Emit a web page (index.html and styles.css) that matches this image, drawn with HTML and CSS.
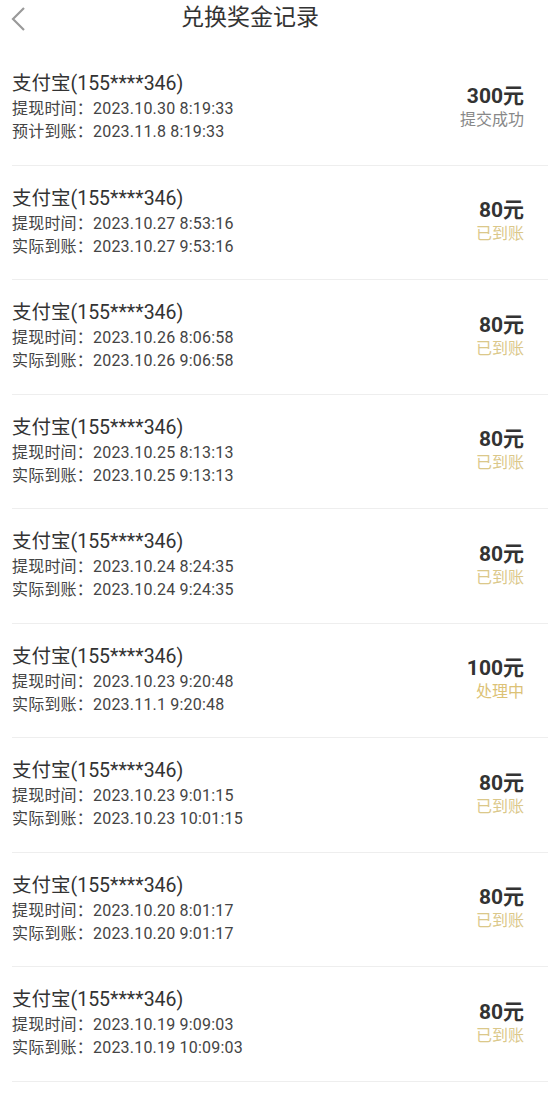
FILE: index.html
```html
<!DOCTYPE html>
<html lang="zh-CN">
<head>
<meta charset="UTF-8">
<meta name="viewport" content="width=device-width, initial-scale=1.0">
<title>兑换奖金记录</title>
<link rel="stylesheet" href="styles.css">
</head>
<body>
<div class="header">
  <a class="back" href="#">
    <svg width="16" height="26" viewBox="0 0 16 26"><path d="M14 2 L3 13 L14 24" fill="none" stroke="#9a9a9a" stroke-width="2.2"/></svg>
  </a>
  <h1>兑换奖金记录</h1>
</div>
<ul class="records">
  <li class="record">
    <div class="info">
      <div class="account">支付宝(155****346)</div>
      <div class="line">提现时间：2023.10.30 8:19:33</div>
      <div class="line">预计到账：2023.11.8 8:19:33</div>
    </div>
    <div class="result">
      <div class="amount">300元</div>
      <div class="status submitted">提交成功</div>
    </div>
  </li>
  <li class="record">
    <div class="info">
      <div class="account">支付宝(155****346)</div>
      <div class="line">提现时间：2023.10.27 8:53:16</div>
      <div class="line">实际到账：2023.10.27 9:53:16</div>
    </div>
    <div class="result">
      <div class="amount">80元</div>
      <div class="status done">已到账</div>
    </div>
  </li>
  <li class="record">
    <div class="info">
      <div class="account">支付宝(155****346)</div>
      <div class="line">提现时间：2023.10.26 8:06:58</div>
      <div class="line">实际到账：2023.10.26 9:06:58</div>
    </div>
    <div class="result">
      <div class="amount">80元</div>
      <div class="status done">已到账</div>
    </div>
  </li>
  <li class="record">
    <div class="info">
      <div class="account">支付宝(155****346)</div>
      <div class="line">提现时间：2023.10.25 8:13:13</div>
      <div class="line">实际到账：2023.10.25 9:13:13</div>
    </div>
    <div class="result">
      <div class="amount">80元</div>
      <div class="status done">已到账</div>
    </div>
  </li>
  <li class="record">
    <div class="info">
      <div class="account">支付宝(155****346)</div>
      <div class="line">提现时间：2023.10.24 8:24:35</div>
      <div class="line">实际到账：2023.10.24 9:24:35</div>
    </div>
    <div class="result">
      <div class="amount">80元</div>
      <div class="status done">已到账</div>
    </div>
  </li>
  <li class="record">
    <div class="info">
      <div class="account">支付宝(155****346)</div>
      <div class="line">提现时间：2023.10.23 9:20:48</div>
      <div class="line">实际到账：2023.11.1 9:20:48</div>
    </div>
    <div class="result">
      <div class="amount">100元</div>
      <div class="status pending">处理中</div>
    </div>
  </li>
  <li class="record">
    <div class="info">
      <div class="account">支付宝(155****346)</div>
      <div class="line">提现时间：2023.10.23 9:01:15</div>
      <div class="line">实际到账：2023.10.23 10:01:15</div>
    </div>
    <div class="result">
      <div class="amount">80元</div>
      <div class="status done">已到账</div>
    </div>
  </li>
  <li class="record">
    <div class="info">
      <div class="account">支付宝(155****346)</div>
      <div class="line">提现时间：2023.10.20 8:01:17</div>
      <div class="line">实际到账：2023.10.20 9:01:17</div>
    </div>
    <div class="result">
      <div class="amount">80元</div>
      <div class="status done">已到账</div>
    </div>
  </li>
  <li class="record">
    <div class="info">
      <div class="account">支付宝(155****346)</div>
      <div class="line">提现时间：2023.10.19 9:09:03</div>
      <div class="line">实际到账：2023.10.19 10:09:03</div>
    </div>
    <div class="result">
      <div class="amount">80元</div>
      <div class="status done">已到账</div>
    </div>
  </li>
</ul>
</body>
</html>
```

FILE: styles.css
```css
body {
  margin: 0;
  padding: 0;
  background-color: #fff;
  font-family: Roboto, "Noto Sans CJK SC", sans-serif;
  color: #333;
}
.header {
  height: 51px;
  display: flex;
  align-items: flex-start;
  padding-left: 10px;
}
.back {
  display: block;
  margin-top: 6px;
  width: 16px;
  height: 26px;
}
.header h1 {
  margin: 3px 0 0 155px;
  font-size: 23px;
  font-weight: normal;
  line-height: 30px;
  color: #333;
}
.records {
  list-style: none;
  margin: 0 11px 0 12px;
  padding: 0;
}
.record {
  display: flex;
  justify-content: space-between;
  align-items: center;
  padding: 20px 24px 21.5px 0;
  border-bottom: 1px solid #eeeeee;
}
.account {
  font-size: 19.5px;
  line-height: 26px;
  color: #333;
}
.line {
  font-size: 16px;
  line-height: 23px;
  letter-spacing: 0.2px;
  color: #444;
}
.result {
  text-align: right;
}
.amount {
  font-size: 21px;
  font-weight: bold;
  line-height: 25px;
  color: #333;
}
.status {
  font-size: 16px;
  line-height: 22px;
}
.status.submitted {
  color: #888;
}
.status.done {
  color: #dbc88a;
}
.status.pending {
  color: #dcc276;
}
```
